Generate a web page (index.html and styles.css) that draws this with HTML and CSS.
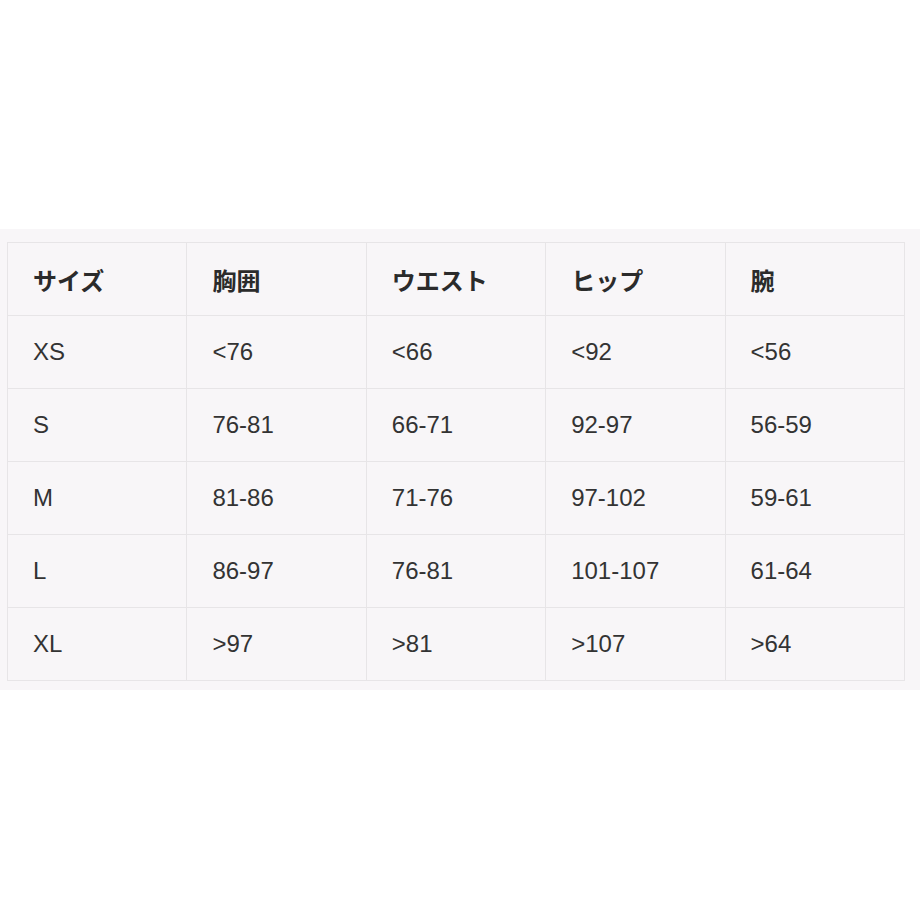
FILE: index.html
```html
<!DOCTYPE html>
<html lang="ja">
<head>
<meta charset="utf-8">
<link rel="stylesheet" href="styles.css">
</head>
<body>
<div class="panel">
  <table class="sizes">
    <thead>
      <tr><th>サイズ</th><th>胸囲</th><th>ウエスト</th><th>ヒップ</th><th>腕</th></tr>
    </thead>
    <tbody>
      <tr><td>XS</td><td>&lt;76</td><td>&lt;66</td><td>&lt;92</td><td>&lt;56</td></tr>
      <tr><td>S</td><td>76-81</td><td>66-71</td><td>92-97</td><td>56-59</td></tr>
      <tr><td>M</td><td>81-86</td><td>71-76</td><td>97-102</td><td>59-61</td></tr>
      <tr><td>L</td><td>86-97</td><td>76-81</td><td>101-107</td><td>61-64</td></tr>
      <tr><td>XL</td><td>&gt;97</td><td>&gt;81</td><td>&gt;107</td><td>&gt;64</td></tr>
    </tbody>
  </table>
</div>
</body>
</html>
```
FILE: styles.css
```css
html, body {
  margin: 0;
  padding: 0;
  background: #ffffff;
}
.panel {
  margin-top: 229px;
  background: #f8f6f8;
  padding: 13px 15px 9px 7px;
}
.sizes {
  width: 898px;
  table-layout: fixed;
  border-collapse: collapse;
  font-family: "Liberation Sans", Arial, "Noto Sans CJK JP", sans-serif;
  font-size: 24px;
  color: #333333;
}
.sizes th,
.sizes td {
  border: 1px solid #e7e5e7;
  height: 73px;
  padding: 0 0 0 25px;
  text-align: left;
  vertical-align: middle;
  box-sizing: border-box;
  background: #f8f6f8;
}
.sizes th {
  font-family: "Noto Sans CJK JP", sans-serif;
  font-weight: 700;
  color: #2b2b2b;
}
```
